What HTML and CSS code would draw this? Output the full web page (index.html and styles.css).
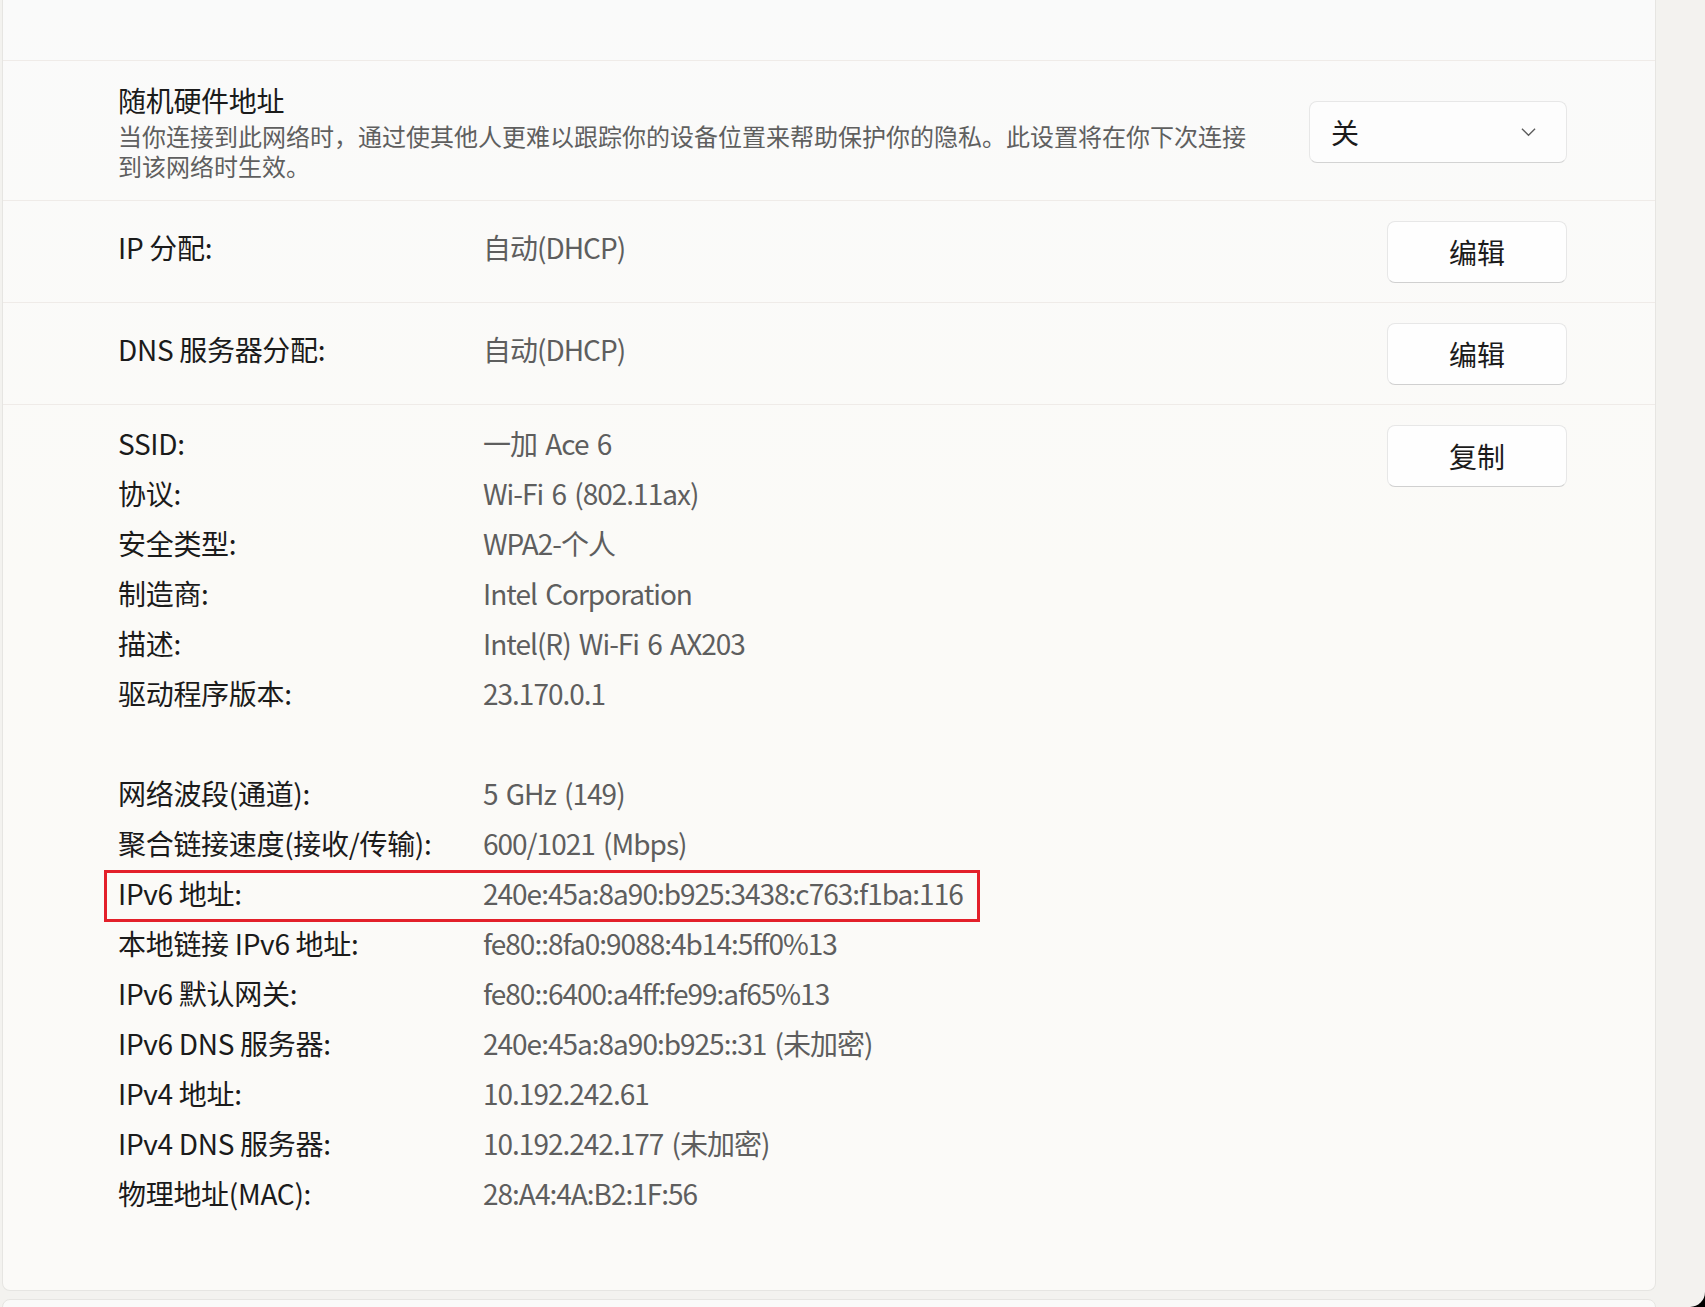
FILE: index.html
```html
<!DOCTYPE html>
<html lang="zh-CN">
<head>
    <meta charset="UTF-8">
    <meta name="viewport" content="width=device-width, initial-scale=1.0">
    <title>WLAN 属性</title>
    <link rel="stylesheet" href="styles.css">
</head>
<body>
    <div class="window">
        <div class="card">
            <div class="card-head"></div>

            <div class="setting">
                <div class="setting-text">
                    <div class="setting-title">随机硬件地址</div>
                    <div class="setting-desc">当你连接到此网络时，通过使其他人更难以跟踪你的设备位置来帮助保护你的隐私。此设置将在你下次连接到该网络时生效。</div>
                </div>
                <div class="select">
                    <span>关</span>
                    <svg class="chevron" viewBox="0 0 16 10">
                        <path d="M1 1.5l7 7 7-7"></path>
                    </svg>
                </div>
            </div>

            <div class="setting setting-inline">
                <span class="label">IP 分配:</span>
                <span class="value">自动(DHCP)</span>
                <button class="btn">编辑</button>
            </div>

            <div class="setting setting-inline">
                <span class="label">DNS 服务器分配:</span>
                <span class="value">自动(DHCP)</span>
                <button class="btn">编辑</button>
            </div>

            <div class="details">
                <div class="props">
                    <dl>
                        <dt>SSID:</dt><dd>一加 Ace 6</dd>
                        <dt>协议:</dt><dd>Wi-Fi 6 (802.11ax)</dd>
                        <dt>安全类型:</dt><dd>WPA2-个人</dd>
                        <dt>制造商:</dt><dd>Intel Corporation</dd>
                        <dt>描述:</dt><dd>Intel(R) Wi-Fi 6 AX203</dd>
                        <dt>驱动程序版本:</dt><dd>23.170.0.1</dd>
                    </dl>
                    <dl class="group">
                        <dt>网络波段(通道):</dt><dd>5 GHz (149)</dd>
                        <dt>聚合链接速度(接收/传输):</dt><dd>600/1021 (Mbps)</dd>
                        <div class="pair marked">
                            <dt>IPv6 地址:</dt><dd>240e:45a:8a90:b925:3438:c763:f1ba:116</dd>
                        </div>
                        <dt>本地链接 IPv6 地址:</dt><dd>fe80::8fa0:9088:4b14:5ff0%13</dd>
                        <dt>IPv6 默认网关:</dt><dd>fe80::6400:a4ff:fe99:af65%13</dd>
                        <dt>IPv6 DNS 服务器:</dt><dd>240e:45a:8a90:b925::31 (未加密)</dd>
                        <dt>IPv4 地址:</dt><dd>10.192.242.61</dd>
                        <dt>IPv4 DNS 服务器:</dt><dd>10.192.242.177 (未加密)</dd>
                        <dt>物理地址(MAC):</dt><dd>28:A4:4A:B2:1F:56</dd>
                    </dl>
                </div>
                <button class="btn btn-copy">复制</button>
            </div>
        </div>

        <div class="card card-next"></div>
    </div>
</body>
</html>
```

FILE: styles.css
```css
* {
    box-sizing: border-box;
}

body {
    margin: 0;
    background: #000;
    font-family: "Noto Sans CJK SC", "Noto Sans", sans-serif;
    color: #1b1b1b;
}

.window {
    height: 1307px;
    padding-left: 2px;
    background: #f3f2ef;
    border-bottom-right-radius: 15px;
    overflow: hidden;
}

.card {
    width: 1654px;
    background: linear-gradient(180deg, #fafafa 0%, #fbfaf7 45%, #fbfaf8 100%);
    border: 1px solid #e6e5e2;
    border-top: none;
    border-radius: 0 0 8px 8px;
}

.card-head {
    height: 60px;
}

.card-next {
    height: 40px;
    margin-top: 8px;
    border-top: 1px solid #e6e5e2;
    border-radius: 8px 8px 0 0;
    background: #fafaf9;
}

.setting {
    display: flex;
    align-items: center;
    gap: 56px;
    padding: 22px 88px 19px 115px;
    border-top: 1px solid #efebe8;
}

.setting-text {
    flex: 1;
}

.setting-title {
    font-size: 28px;
    line-height: 34px;
    margin-bottom: 4px;
    letter-spacing: -0.3px;
}

.setting-desc {
    font-size: 24px;
    line-height: 30px;
    color: #5f5f5f;
}

.select {
    display: flex;
    align-items: center;
    justify-content: space-between;
    width: 258px;
    height: 62px;
    padding: 0 30px 0 21px;
    background: #fdfdfd;
    border: 1px solid #e7e7e7;
    border-bottom-color: #d3d3d3;
    border-radius: 8px;
    font-size: 28px;
}

.chevron {
    width: 15px;
    height: 10px;
    fill: none;
    stroke: #5c5c5c;
    stroke-width: 1.4;
}

.setting-inline {
    display: grid;
    grid-template-columns: 365px 1fr 180px;
    gap: 0;
    height: 102px;
    padding: 0 88px 0 115px;
    font-size: 28px;
}

.label,
.value {
    margin-bottom: 9px;
}

.label {
    color: #1b1b1b;
    letter-spacing: -0.3px;
}

.value {
    color: #5e5e5e;
    letter-spacing: -1px;
    word-spacing: 3px;
}

.btn {
    width: 180px;
    height: 62px;
    padding: 0;
    font-family: inherit;
    font-size: 28px;
    color: #1b1b1b;
    background: #fefefe;
    border: 1px solid #e7e7e7;
    border-bottom-color: #d0d0d0;
    border-radius: 8px;
}

.details {
    display: flex;
    align-items: flex-start;
    padding: 13px 88px 72px 115px;
    border-top: 1px solid #efebe8;
}

.props {
    flex: 1;
}

.props dl {
    display: grid;
    grid-template-columns: 365px 1fr;
    margin: 0;
    font-size: 28px;
    line-height: 50px;
}

.props .group {
    margin-top: 50px;
}

.props dt {
    color: #1b1b1b;
    letter-spacing: -0.3px;
}

.props dd {
    margin: 0;
    color: #5e5e5e;
    letter-spacing: -1px;
    word-spacing: 3px;
}

.pair {
    display: contents;
}

/* red frame drawn over the IPv6 address row */
.pair.marked dt {
    position: relative;
}

.pair.marked dt::after {
    content: "";
    position: absolute;
    left: -14px;
    top: 2px;
    width: 870px;
    height: 46px;
    border: 3px solid #e3202a;
}

.btn-copy {
    margin-top: 7px;
}
```
